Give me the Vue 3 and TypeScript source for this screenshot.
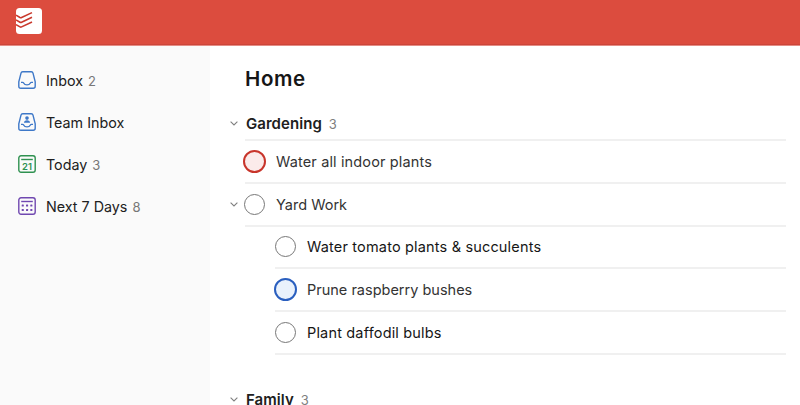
<script setup lang="ts">
interface NavItem {
  icon: 'inbox' | 'team' | 'today' | 'week'
  label: string
  count?: number
}

interface Task {
  title: string
  tone: 'plain' | 'red' | 'blue'
  dark?: boolean
  nested?: boolean
  open?: boolean
}

const nav: NavItem[] = [
  { icon: 'inbox', label: 'Inbox', count: 2 },
  { icon: 'team', label: 'Team Inbox' },
  { icon: 'today', label: 'Today', count: 3 },
  { icon: 'week', label: 'Next 7 Days', count: 8 },
]

const tasks: Task[] = [
  { title: 'Water all indoor plants', tone: 'red' },
  { title: 'Yard Work', tone: 'plain', open: true },
  { title: 'Water tomato plants & succulents', tone: 'plain', dark: true, nested: true },
  { title: 'Prune raspberry bushes', tone: 'blue', nested: true },
  { title: 'Plant daffodil bulbs', tone: 'plain', dark: true, nested: true },
]
</script>

<template>
  <div class="app">
    <header class="topbar">
      <svg class="logo" viewBox="0 0 26 26" width="26" height="26">
        <rect width="26" height="26" rx="3.5" fill="#fff" />
        <g fill="none" stroke="#c9392d" stroke-width="1.6" stroke-linejoin="round">
          <path d="M0 7.2 4 9.5Q4.8 9.9 5.6 9.5L16 4.6" />
          <path d="M0 11.9 4 14.2Q4.8 14.6 5.6 14.2L16 9.3" />
          <path d="M0 16.6 4 18.9Q4.8 19.3 5.6 18.9L16 14" />
        </g>
      </svg>
    </header>
    <div class="body">
      <nav class="sidebar">
        <a v-for="item in nav" :key="item.label" class="nav-item">
          <svg class="nav-icon" :class="item.icon" viewBox="0 0 18 18" width="18" height="18">
            <template v-if="item.icon === 'inbox' || item.icon === 'team'">
              <path d="M4.7.8h8.6q1.4 0 1.7 1.3l2.2 8.7v4.4q0 2-2 2H2.8q-2 0-2-2v-4.4L3 2.1Q3.3.8 4.7.8Z" />
              <path d="M3 11.4h1.6q.7 0 1 .6 1 1.9 3.4 1.9t3.4-1.9q.3-.6 1-.6H15" />
              <g v-if="item.icon === 'team'" class="solid">
                <circle cx="9" cy="5.1" r="1.8" />
                <path d="M5.9 9.8q.2-2.5 3.1-2.5t3.1 2.5Z" />
              </g>
            </template>
            <template v-else>
              <rect x=".8" y=".8" width="16.4" height="16.4" rx="2.2" />
              <path d="M3.2 4.5h11.6" />
              <text v-if="item.icon === 'today'" x="9" y="14.6" text-anchor="middle">21</text>
              <g v-else class="solid">
                <template v-for="y in [7.4, 12]" :key="y">
                  <rect v-for="x in [3.7, 8, 12.3]" :key="x" :x="x" :y="y" width="2.1" height="2.1" rx=".5" />
                </template>
              </g>
            </template>
          </svg>
          <span class="nav-label">{{ item.label }}</span>
          <span v-if="item.count" class="nav-count">{{ item.count }}</span>
        </a>
      </nav>
      <main class="content">
        <h1>Home</h1>
        <h2 class="section">
          <svg class="chevron" viewBox="0 0 8 5" width="8" height="5"><path d="M.6.6 4 4 7.4.6" /></svg>
          <span class="section-name">Gardening</span>
          <span class="section-count">3</span>
        </h2>
        <ul class="tasks">
          <li v-for="task in tasks" :key="task.title" class="task" :class="{ nested: task.nested }">
            <svg v-if="task.open" class="chevron" viewBox="0 0 8 5" width="8" height="5"><path d="M.6.6 4 4 7.4.6" /></svg>
            <span class="check" :class="task.tone"></span>
            <span class="title" :class="[task.tone, { dark: task.dark }]">{{ task.title }}</span>
          </li>
        </ul>
        <h2 class="section next">
          <svg class="chevron" viewBox="0 0 8 5" width="8" height="5"><path d="M.6.6 4 4 7.4.6" /></svg>
          <span class="section-name">Family</span>
          <span class="section-count">3</span>
        </h2>
      </main>
    </div>
  </div>
</template>

<style>
body {
  margin: 0;
  overflow: hidden;
}
</style>

<style scoped>
.app {
  height: 405px;
  overflow: hidden;
  display: flex;
  flex-direction: column;
  background: #fff;
  color: #202020;
  font-family: Inter, 'Liberation Sans', sans-serif;
}
.topbar {
  height: 46px;
  flex: none;
  box-sizing: border-box;
  padding: 7.5px 0 0 16px;
  background: #dc4c3e;
  border-bottom: 1px solid #e58d85;
  box-shadow: inset 0 -1px #cc453a;
}
.logo {
  display: block;
}
.body {
  flex: 1;
  display: flex;
  min-height: 0;
}
.sidebar {
  width: 210px;
  flex: none;
  box-sizing: border-box;
  padding: 13px 0 0 18px;
  background: #fafafa;
}
.nav-item {
  display: flex;
  align-items: center;
  height: 42px;
}
.nav-icon {
  flex: none;
  margin-right: 10px;
  fill: none;
  stroke: currentColor;
  stroke-width: 1.4;
}
.nav-icon.inbox,
.nav-icon.team {
  color: #3e78c8;
}
.nav-icon.today {
  color: #2f9150;
}
.nav-icon.week {
  color: #7048b0;
}
.nav-icon text,
.nav-icon .solid {
  fill: currentColor;
  stroke: none;
}
.nav-icon text {
  font-size: 9.5px;
  font-weight: 600;
}
.nav-label {
  font-size: 14.3px;
}
.nav-count {
  margin-left: 5px;
  padding-top: 1px;
  font-size: 13px;
  color: #777;
}
.content {
  flex: 1;
  padding: 0 14px 0 35px;
}
h1 {
  margin: 0;
  padding-top: 17px;
  font-size: 20.5px;
  line-height: 32px;
  font-weight: 600;
  letter-spacing: 0.6px;
  color: #161616;
}
.section {
  display: flex;
  align-items: center;
  margin: 13px 0 0 -15px;
  height: 31px;
  font-size: 15px;
  font-weight: 600;
}
.section.next {
  margin-top: 29px;
}
.chevron {
  flex: none;
  fill: none;
  stroke: #808080;
  stroke-width: 1.1;
}
.section .chevron {
  margin-right: 8px;
}
.section-name {
  letter-spacing: 0.05px;
}
.section-count {
  margin-left: 7px;
  font-size: 13px;
  font-weight: 400;
  color: #808080;
}
.tasks {
  list-style: none;
  margin: 0;
  padding: 0;
  border-top: 2px solid #f0f0f0;
}
.task {
  display: flex;
  align-items: center;
  box-sizing: border-box;
  height: 43px;
  padding-bottom: 1px;
  border-bottom: 2px solid #f0f0f0;
}
.task:not(.nested) .check {
  margin-left: -1px;
}
.task:not(.nested) .check.red {
  margin-left: -2px;
}
.task.nested {
  margin-left: 30px;
}
.task:not(.nested) + .nested {
  height: 42px;
}
.task > .chevron {
  margin: 0 7px 0 -15px;
}
.check {
  flex: none;
  box-sizing: border-box;
  width: 21px;
  height: 21px;
  margin-right: 11px;
  border: 1.3px solid #777;
  border-radius: 50%;
}
.check.red,
.check.blue {
  width: 23px;
  height: 23px;
  margin: 0 10px 0 -1px;
  border-width: 2px;
}
.check.red {
  border-color: #c8352b;
  background: #fbebea;
}
.check.blue {
  border-color: #2a5fbf;
  background: #eaf2fc;
}
.title {
  font-size: 14.5px;
  color: #333;
}
.title.red {
  letter-spacing: 0.14px;
}
.title.dark {
  color: #161616;
  letter-spacing: 0.17px;
}
</style>
